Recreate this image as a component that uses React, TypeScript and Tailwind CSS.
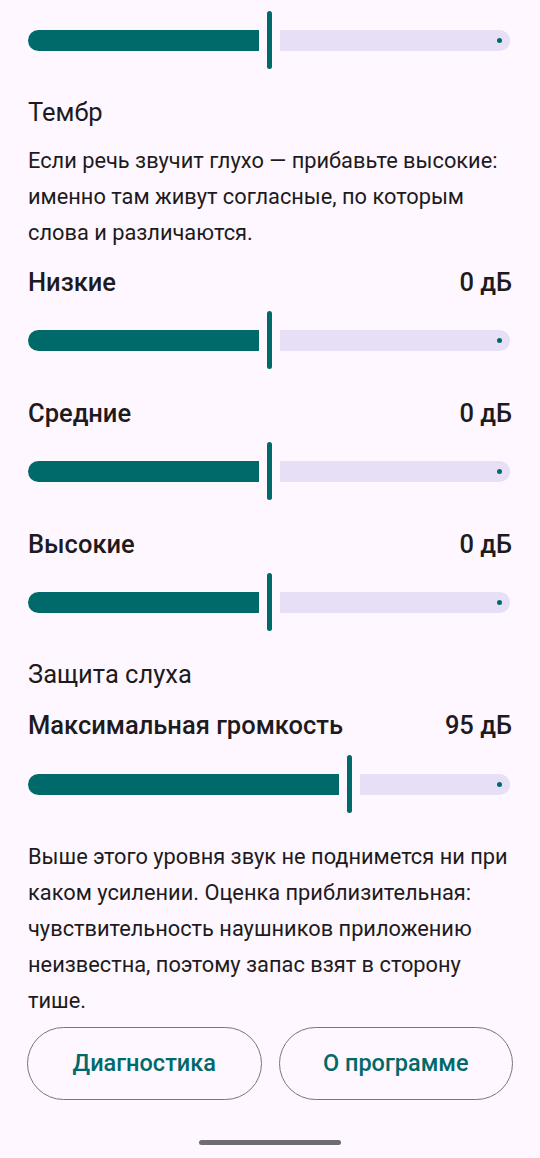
import React from 'react';

const TEAL = 'bg-[#006a6a]';

function Slider({ activeWidth }: { activeWidth: string }) {
  return (
    <div className="flex h-[58px] items-center pr-[2px]">
      <div className={`${activeWidth} h-[21px] flex-none rounded-l-full rounded-r-[3px] ${TEAL}`} />
      <div className={`ml-[8px] h-[58px] w-[5px] flex-none rounded-full ${TEAL}`} />
      <div className="ml-[8px] flex h-[21px] flex-1 items-center justify-end rounded-l-[3px] rounded-r-full bg-[#e7dff6] pr-[8px]">
        <div className={`h-[5px] w-[5px] rounded-full ${TEAL}`} />
      </div>
    </div>
  );
}

function Row({ label, value }: { label: string; value: string }) {
  return (
    <div className="flex items-center justify-between text-[25.5px] font-medium leading-[28px] text-[#1d1b20]">
      <span>{label}</span>
      <span>{value}</span>
    </div>
  );
}

export default function App() {
  return (
    <div
      className="min-h-[1158px] bg-[#fef7ff] px-[28px] pt-[11px]"
      style={{ fontFamily: 'Roboto, "Noto Sans", sans-serif' }}
    >
      <Slider activeWidth="w-[231px]" />

      <h2 className="mt-[27px] text-[25.5px] leading-[32px] text-[#1d1b20]">Тембр</h2>
      <p className="mt-[15px] text-[21.8px] leading-[36px] text-[#1d1b20]">
        Если речь звучит глухо — прибавьте высокие: именно там живут согласные, по которым слова и
        различаются.
      </p>

      <div className="mt-[17px]">
        <Row label="Низкие" value="0 дБ" />
      </div>
      <div className="mt-[15px]">
        <Slider activeWidth="w-[231px]" />
      </div>

      <div className="mt-[30px]">
        <Row label="Средние" value="0 дБ" />
      </div>
      <div className="mt-[15px]">
        <Slider activeWidth="w-[231px]" />
      </div>

      <div className="mt-[30px]">
        <Row label="Высокие" value="0 дБ" />
      </div>
      <div className="mt-[15px]">
        <Slider activeWidth="w-[231px]" />
      </div>

      <h2 className="mt-[27px] text-[25.5px] leading-[32px] text-[#1d1b20]">Защита слуха</h2>
      <div className="mt-[21px]">
        <Row label="Максимальная громкость" value="95 дБ" />
      </div>
      <div className="mt-[16px]">
        <Slider activeWidth="w-[311px]" />
      </div>

      <p className="mt-[26px] text-[21.8px] leading-[36px] text-[#1d1b20]">
        Выше этого уровня звук не поднимется ни при каком усилении. Оценка приблизительная:
        чувствительность наушников приложению неизвестна, поэтому запас взят в сторону тише.
      </p>

      <div className="mt-[8px] grid grid-cols-2 gap-[17px] -mx-[1px]">
        <button className="h-[73px] rounded-full border border-[#79747e] text-[23.5px] font-medium text-[#006a6a]">
          Диагностика
        </button>
        <button className="h-[73px] rounded-full border border-[#79747e] text-[23.5px] font-medium text-[#006a6a]">
          О программе
        </button>
      </div>

      <div className="mt-[40px] flex justify-center">
        <div className="h-[5px] w-[142px] rounded-full bg-[#6f6c74]" />
      </div>
    </div>
  );
}
